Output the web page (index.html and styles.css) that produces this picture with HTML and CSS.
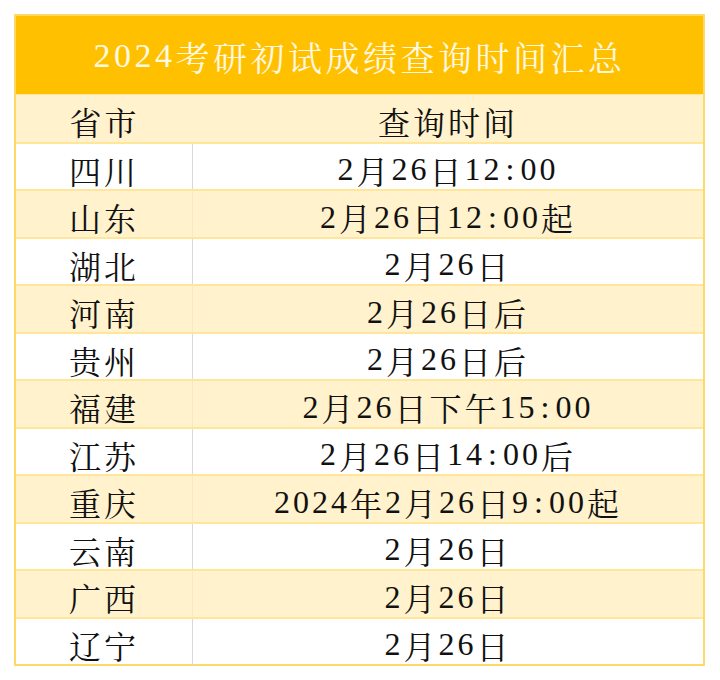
FILE: index.html
```html
<!DOCTYPE html>
<html>
<head>
<meta charset="utf-8">
<title>2024考研初试成绩查询时间汇总</title>
<link rel="stylesheet" href="styles.css">
</head>
<body>
<div class="sheet">
  <div class="title"><span class="num">2024</span>考研初试成绩查询时间汇总</div>
  <div class="row head"><div class="c1">省市</div><div class="c2">查询时间</div></div>
  <div class="row w"><div class="c1">四川</div><div class="c2"><span class="num">2</span>月<span class="num">26</span>日<span class="num">12<span class="colon">:</span>00</span></div></div>
  <div class="row y"><div class="c1">山东</div><div class="c2"><span class="num">2</span>月<span class="num">26</span>日<span class="num">12<span class="colon">:</span>00</span>起</div></div>
  <div class="row w"><div class="c1">湖北</div><div class="c2"><span class="num">2</span>月<span class="num">26</span>日</div></div>
  <div class="row y"><div class="c1">河南</div><div class="c2"><span class="num">2</span>月<span class="num">26</span>日后</div></div>
  <div class="row w"><div class="c1">贵州</div><div class="c2"><span class="num">2</span>月<span class="num">26</span>日后</div></div>
  <div class="row y"><div class="c1">福建</div><div class="c2"><span class="num">2</span>月<span class="num">26</span>日下午<span class="num">15<span class="colon">:</span>00</span></div></div>
  <div class="row w"><div class="c1">江苏</div><div class="c2"><span class="num">2</span>月<span class="num">26</span>日<span class="num">14<span class="colon">:</span>00</span>后</div></div>
  <div class="row y"><div class="c1">重庆</div><div class="c2"><span class="num">2024</span>年<span class="num">2</span>月<span class="num">26</span>日<span class="num">9<span class="colon">:</span>00</span>起</div></div>
  <div class="row w"><div class="c1">云南</div><div class="c2"><span class="num">2</span>月<span class="num">26</span>日</div></div>
  <div class="row y"><div class="c1">广西</div><div class="c2"><span class="num">2</span>月<span class="num">26</span>日</div></div>
  <div class="row w"><div class="c1">辽宁</div><div class="c2"><span class="num">2</span>月<span class="num">26</span>日</div></div>
</div>
</body>
</html>
```
FILE: styles.css
```css
html, body {
  margin: 0;
  padding: 0;
  background: #ffffff;
}
body {
  padding: 14px 15px 0 14px;
  font-family: "Noto Serif CJK SC", "Noto Sans CJK SC", serif;
  color: #111111;
}
.num {
  font-family: "Liberation Serif", serif;
}
.colon {
  padding: 0 3px;
}
.sheet {
  width: 691px;
  box-sizing: border-box;
  border: 2px solid #ffd966;
  display: flex;
  flex-direction: column;
}
.title {
  height: 78px;
  background: #ffc000;
  color: #fff8e3;
  font-size: 34px;
  letter-spacing: 3.5px;
  display: flex;
  align-items: center;
  justify-content: center;
  padding-top: 2px;
  box-sizing: border-box;
}
.row {
  height: 47.5px;
  box-sizing: border-box;
  border-top: 2px solid #ffe699;
  display: grid;
  grid-template-columns: 177px 1fr;
  font-size: 32px;
  letter-spacing: 3px;
}
.row.head {
  border-top: 1px solid #ffe699;
}
.row.y, .row.head {
  background: #fff2cc;
}
.row.w {
  background: #ffffff;
}
.c1, .c2 {
  display: flex;
  align-items: center;
  justify-content: center;
  padding-top: 3px;
  white-space: nowrap;
}
.row.w .c1 {
  border-right: 1px solid #d9d9d9;
}
.row.y .c1 {
  border-right: 1px solid #fbe9bd;
}
```
